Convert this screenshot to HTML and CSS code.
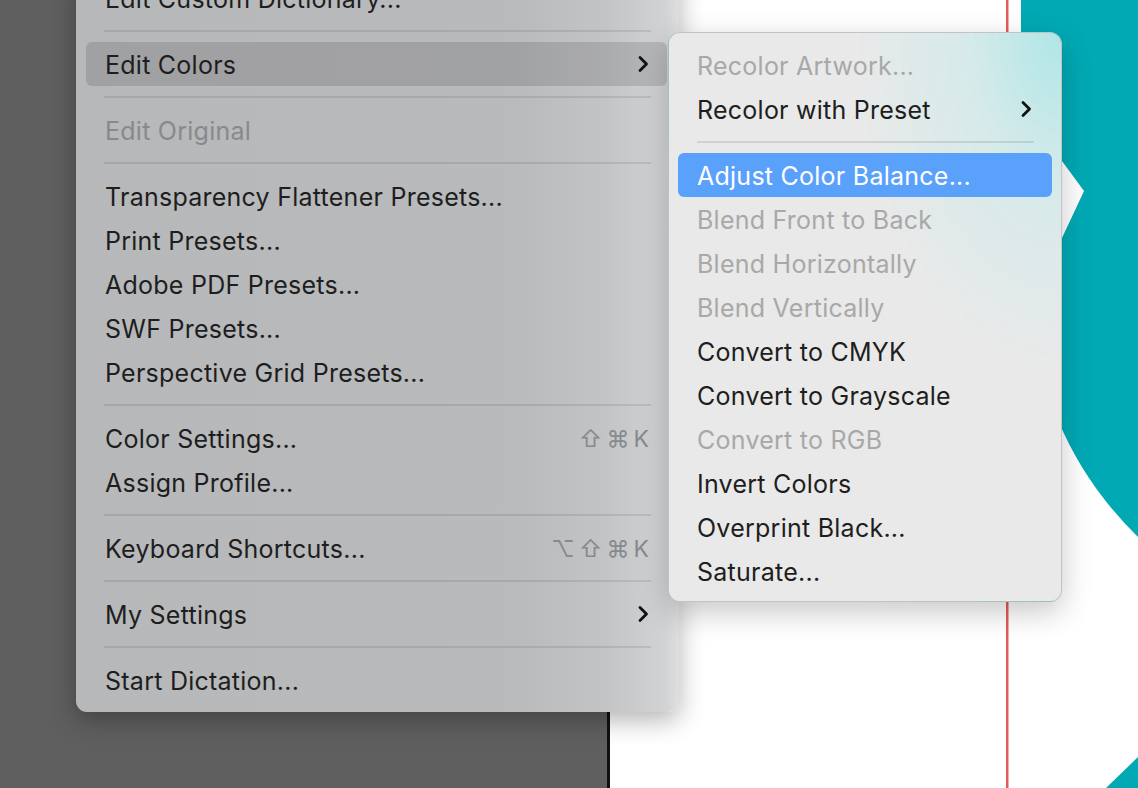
FILE: index.html
```html
<!DOCTYPE html>
<html lang="en">
<head>
  <meta charset="UTF-8">
  <title>Edit Colors menu</title>
  <link rel="stylesheet" href="styles.css">
</head>
<body>

  <div class="desktop">
    <div class="pasteboard"></div>

    <div class="artboard">
      <!-- artwork on the artboard -->
      <svg class="artwork" viewBox="610 0 528 788" width="528" height="788">
        <path d="M1021 0 H1138 V537 Q1085 485 1058 420 L1021 40 Z" fill="#00a9b4"/>
        <polygon points="1040,131 1084,191 1040,285" fill="#ffffff"/>
        <polygon points="1138,757 1106,788 1138,788" fill="#00a9b4"/>
        <rect x="1006" y="0" width="2.5" height="788" fill="#e35a5a"/>
      </svg>
    </div>

    <!-- Main context menu -->
    <div class="menu main-menu">
      <div class="item">Edit Custom Dictionary...</div>
      <div class="sep"></div>
      <div class="item active">Edit Colors
        <svg class="chev" viewBox="0 0 12 18" width="12" height="18"><path d="M3 2.5 L9.5 9 L3 15.5"/></svg>
      </div>
      <div class="sep"></div>
      <div class="item disabled">Edit Original</div>
      <div class="sep"></div>
      <div class="item">Transparency Flattener Presets...</div>
      <div class="item">Print Presets...</div>
      <div class="item">Adobe PDF Presets...</div>
      <div class="item">SWF Presets...</div>
      <div class="item">Perspective Grid Presets...</div>
      <div class="sep"></div>
      <div class="item">Color Settings... <span class="keys">⇧⌘K</span></div>
      <div class="item">Assign Profile...</div>
      <div class="sep"></div>
      <div class="item">Keyboard Shortcuts... <span class="keys">⌥⇧⌘K</span></div>
      <div class="sep"></div>
      <div class="item">My Settings
        <svg class="chev" viewBox="0 0 12 18" width="12" height="18"><path d="M3 2.5 L9.5 9 L3 15.5"/></svg>
      </div>
      <div class="sep"></div>
      <div class="item">Start Dictation...</div>
    </div>

    <!-- Edit Colors submenu -->
    <div class="menu submenu">
      <div class="item disabled">Recolor Artwork...</div>
      <div class="item">Recolor with Preset
        <svg class="chev" viewBox="0 0 12 18" width="12" height="18"><path d="M3 2.5 L9.5 9 L3 15.5"/></svg>
      </div>
      <div class="sep"></div>
      <div class="item selected">Adjust Color Balance...</div>
      <div class="item disabled">Blend Front to Back</div>
      <div class="item disabled">Blend Horizontally</div>
      <div class="item disabled">Blend Vertically</div>
      <div class="item">Convert to CMYK</div>
      <div class="item">Convert to Grayscale</div>
      <div class="item disabled">Convert to RGB</div>
      <div class="item">Invert Colors</div>
      <div class="item">Overprint Black...</div>
      <div class="item">Saturate...</div>
    </div>
  </div>

</body>
</html>
```

FILE: styles.css
```css
body {
  margin: 0;
  width: 1138px;
  height: 788px;
  overflow: hidden;
  font-family: Inter, "Noto Sans", sans-serif;
}
.desktop {
  position: relative;
  display: flex;
  width: 1138px;
  height: 788px;
}
.pasteboard {
  width: 607px;
  background-color: #5f5f5f;
  border-right: 3px solid #111;
}
.artboard {
  flex: 1;
  position: relative;
  background-color: #fff;
}
.artwork {
  position: absolute;
  left: 0;
  top: 0;
  display: block;
}

.menu {
  position: absolute;
  box-sizing: border-box;
  font-size: 25px;
  letter-spacing: 0.25px;
  color: #1e1e20;
}
.menu .item {
  display: flex;
  align-items: center;
  justify-content: space-between;
  box-sizing: border-box;
  height: 44px;
  padding-top: 2px;
  border-radius: 6px;
  white-space: nowrap;
}
.menu .disabled {
  color: #88898b;
}
.menu .chev {
  display: block;
  margin-top: -2px;
  fill: none;
  stroke: #111;
  stroke-width: 2.8;
  stroke-linecap: round;
  stroke-linejoin: round;
}
.menu .sep {
  height: 2px;
  margin: 10px 28px;
  background-color: rgba(0, 0, 0, 0.09);
}

.main-menu {
  left: 76px;
  top: -34px;
  width: 603px;
  padding: 10px 0;
  border-radius: 11px;
  background: linear-gradient(to right, #b7b8ba 0, #b9babc 440px, #c3c4c6 530px, #d2d3d5 590px, #dedfe1 603px);
  box-shadow: 0 8px 26px rgba(0, 0, 0, 0.3);
}
.main-menu .item {
  margin: 0 12px 0 10px;
  padding-left: 19px;
  padding-right: 18px;
}
.main-menu .active {
  background-color: rgba(0, 0, 0, 0.125);
}
.main-menu .keys {
  font-size: 23px;
  color: #88898b;
  letter-spacing: 4px;
  margin-right: -4px;
}

.submenu {
  left: 668px;
  top: 32px;
  width: 394px;
  height: 570px;
  padding: 10px 0 8px;
  border: 1px solid rgba(0, 0, 0, 0.16);
  border-radius: 12px;
  background:
    radial-gradient(ellipse 210px 340px at 100% 0, rgba(172, 230, 230, 0.95) 0, rgba(200, 235, 235, 0.55) 45%, rgba(233, 233, 233, 0) 100%),
    #e9e9e9;
  box-shadow: 0 10px 30px rgba(0, 0, 0, 0.22);
}
.submenu .item {
  margin: 0 9px;
  padding-left: 19px;
  padding-right: 20px;
}
.submenu .disabled {
  color: #a8a8a8;
}
.submenu .selected {
  background-color: #5aa1fc;
  color: #fff;
}
.submenu .sep {
  margin: 10px 27px 10px 28px;
  background-color: rgba(0, 0, 0, 0.1);
}
```
